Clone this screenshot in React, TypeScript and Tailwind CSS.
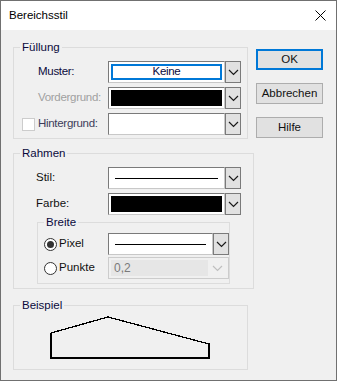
import React from "react";

const font = { fontFamily: '"Liberation Sans", Arial, sans-serif' };

function Chevron({ disabled }: { disabled?: boolean }) {
  return (
    <svg width="11" height="7" viewBox="0 0 11 7" className="block">
      <polyline
        points="1,1 5.5,5.5 10,1"
        fill="none"
        stroke={disabled ? "#bfbfbf" : "#1a1a1a"}
        strokeWidth="1.2"
      />
    </svg>
  );
}

function Combo({
  children,
  width = "w-[133px]",
  disabled,
}: {
  children?: React.ReactNode;
  width?: string;
  disabled?: boolean;
}) {
  if (disabled) {
    return (
      <div className={`flex h-[22px] ${width} items-stretch border border-[#cccccc] bg-[#f0f0f0] p-[2px]`}>
        <div className="flex flex-1 items-center bg-[#e6e6e6] pl-[3px] text-[12px] text-[#7a7a7a]">{children}</div>
        <div className="flex w-[18px] items-center justify-center">
          <Chevron disabled />
        </div>
      </div>
    );
  }
  return (
    <div className={`flex h-[22px] ${width} items-stretch`}>
      <div className="flex-1 border border-[#7a7a7a] border-b-[#c8c8c8] border-r-[#c8c8c8] bg-white p-[2px]">
        {children}
      </div>
      <div className="flex w-[16px] items-center justify-center border border-[#7a7a7a] bg-[#e1e1e1]">
        <Chevron />
      </div>
    </div>
  );
}

function Line() {
  return (
    <div className="flex h-full items-center px-[4px]">
      <div className="h-[1px] w-full bg-black" />
    </div>
  );
}

function Radio({ checked }: { checked?: boolean }) {
  return (
    <span className="flex h-[13px] w-[13px] items-center justify-center rounded-full border border-[#333333] bg-white">
      {checked && <span className="h-[7px] w-[7px] rounded-full bg-[#333333]" />}
    </span>
  );
}

function Button({ label, primary }: { label: string; primary?: boolean }) {
  return (
    <button
      className={`flex h-[21px] w-[67px] items-center justify-center bg-[#e1e1e1] text-[11.5px] text-[#111111] ${
        primary ? "border-2 border-[#0078d7]" : "border border-[#adadad]"
      }`}
    >
      {label}
    </button>
  );
}

function Group({ title, className, children }: { title: string; className?: string; children?: React.ReactNode }) {
  return (
    <fieldset className={`border border-[#dcdcdc] px-0 ${className ?? ""}`}>
      <legend className="ml-[6px] px-[2px] text-[11.5px] leading-[14px] text-[#0a0a3c]">{title}</legend>
      {children}
    </fieldset>
  );
}

export default function App() {
  return (
    <div className="h-[381px] w-[337px] border border-[#707070] bg-[#f0f0f0] text-[11.5px] text-[#111111]" style={font}>
      <div className="flex h-[29px] items-center justify-between bg-white pl-[8px] pr-[10px]">
        <span className="text-[11.5px] text-black">Bereichsstil</span>
        <svg width="11" height="11" viewBox="0 0 11 11">
          <path d="M0.5 0.5 L10.5 10.5 M10.5 0.5 L0.5 10.5" stroke="#000" strokeWidth="1" />
        </svg>
      </div>

      <div className="flex pl-[12px] pt-[10px]">
        <div className="flex w-[235px] flex-col">
          <Group title="Füllung" className="h-[99px]">
            <div className="flex flex-col gap-[4px] pt-[7px] tracking-[-0.3px]">
              <div className="flex items-center">
                <span className="w-[94px] pl-[24px] text-[#0a0a3c]">Muster:</span>
                <Combo>
                  <div className="flex h-full items-center justify-center border-2 border-[#0078d7] text-[11.5px] text-[#0a0a3c]">
                    Keine
                  </div>
                </Combo>
              </div>
              <div className="flex items-center">
                <span className="w-[94px] pl-[24px] text-[#a0a0a0]">Vordergrund:</span>
                <Combo>
                  <div className="h-full bg-black" />
                </Combo>
              </div>
              <div className="flex items-center">
                <span className="flex w-[94px] items-center gap-[3px] pl-[8px] text-[#3c3c5a]">
                  <span className="h-[13px] w-[13px] border border-[#cccccc] bg-white" />
                  Hintergrund:
                </span>
                <Combo />
              </div>
            </div>
          </Group>

          <Group title="Rahmen" className="mt-[7px] h-[143px]">
            <div className="flex flex-col gap-[4px] pt-[7px]">
              <div className="flex items-center">
                <span className="w-[94px] pl-[22px]">Stil:</span>
                <Combo>
                  <Line />
                </Combo>
              </div>
              <div className="flex items-center">
                <span className="w-[94px] pl-[22px]">Farbe:</span>
                <Combo>
                  <div className="h-full bg-black" />
                </Combo>
              </div>
            </div>
            <Group title="Breite" className="mx-[23px] h-[69px]">
              <div className="flex flex-col gap-[2px] pt-[4px]">
                <div className="flex items-center">
                  <span className="flex w-[70px] items-center gap-[2px] pl-[6px]">
                    <Radio checked />
                    Pixel
                  </span>
                  <Combo width="w-[121px]">
                    <Line />
                  </Combo>
                </div>
                <div className="flex items-center">
                  <span className="flex w-[70px] items-center gap-[2px] pl-[6px]">
                    <Radio />
                    Punkte
                  </span>
                  <Combo width="w-[121px]" disabled>
                    0,2
                  </Combo>
                </div>
              </div>
            </Group>
          </Group>

          <Group title="Beispiel" className="mt-[9px] h-[72px]">
            <svg width="162" height="44" viewBox="0 0 162 44" className="ml-[36px] mt-[4px] block" shapeRendering="crispEdges">
              <polyline points="1,17 58,1 159,28 159,42 1,42 1,17" fill="none" stroke="#000" strokeWidth="1.3" />
            </svg>
          </Group>
        </div>

        <div className="ml-[8px] flex flex-col gap-[13px] pt-[9px]">
          <Button label="OK" primary />
          <Button label="Abbrechen" />
          <Button label="Hilfe" />
        </div>
      </div>
    </div>
  );
}
